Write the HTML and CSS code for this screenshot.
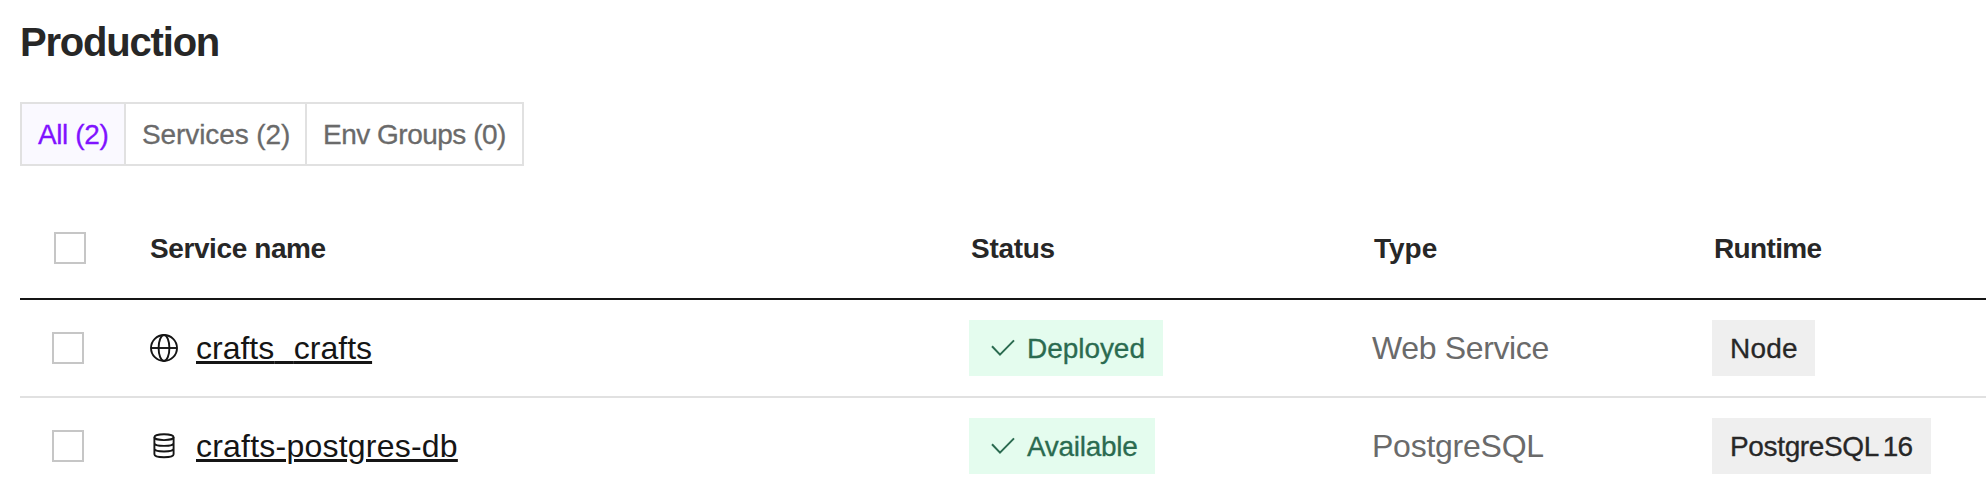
FILE: index.html
```html
<!DOCTYPE html>
<html lang="en">
<head>
<meta charset="utf-8">
<title>Production</title>
<link rel="stylesheet" href="styles.css">
</head>
<body>
<main class="page">
  <h1 class="title">Production</h1>
  <nav class="tabs">
    <button class="tab tab-all active">All (2)</button>
    <button class="tab tab-services">Services (2)</button>
    <button class="tab tab-env">Env Groups (0)</button>
  </nav>
  <section class="table">
    <div class="row head">
      <div class="cell"><span class="checkbox"></span></div>
      <div class="cell name-head">Service name</div>
      <div class="cell status-head">Status</div>
      <div class="cell">Type</div>
      <div class="cell runtime-head">Runtime</div>
    </div>
    <div class="row">
      <div class="cell"><span class="checkbox"></span></div>
      <div class="cell name">
        <svg class="icon" viewBox="0 0 28 28"><circle cx="14" cy="14" r="13"/><ellipse cx="14" cy="14" rx="5.4" ry="13"/><path d="M1 14H27"/></svg>
        <a class="link link-web">crafts<span class="underscore">_</span>crafts</a>
      </div>
      <div class="cell"><span class="badge status deployed"><svg class="check" viewBox="0 0 24 20"><path d="M1 8.2L9 16.6L23 2.4"/></svg>Deployed</span></div>
      <div class="cell type type-web">Web Service</div>
      <div class="cell"><span class="badge runtime node">Node</span></div>
    </div>
    <div class="row last">
      <div class="cell"><span class="checkbox"></span></div>
      <div class="cell name">
        <svg class="icon" viewBox="0 0 28 28"><ellipse cx="14" cy="5.2" rx="9.6" ry="2.9"/><path d="M4.4 5.2V22.3C4.4 26.2 23.6 26.2 23.6 22.3V5.2M4.4 10.9C4.4 14.8 23.6 14.8 23.6 10.9M4.4 16.6C4.4 20.5 23.6 20.5 23.6 16.6"/></svg>
        <a class="link link-db">crafts-postgres-db</a>
      </div>
      <div class="cell"><span class="badge status available"><svg class="check" viewBox="0 0 24 20"><path d="M1 8.2L9 16.6L23 2.4"/></svg>Available</span></div>
      <div class="cell type">PostgreSQL</div>
      <div class="cell"><span class="badge runtime postgres">PostgreSQL<span class="version"> 16</span></span></div>
    </div>
  </section>
</main>
</body>
</html>
```
FILE: styles.css
```css
* { box-sizing: border-box; }
body {
  margin: 0;
  background: #fff;
  color: #272727;
  font-family: "Liberation Sans", Arial, sans-serif;
  overflow: hidden;
}
.page { padding: 20px 0 0 20px; }
.title {
  margin: 0 0 38px;
  height: 44px;
  font-size: 40px;
  line-height: 44px;
  font-weight: 700;
  letter-spacing: -1.2px;
}
.tabs {
  display: inline-flex;
  height: 64px;
  border: 2px solid #e1e1e1;
}
.tab {
  padding: 1px 0 0 16px;
  border: 0;
  border-right: 2px solid #e1e1e1;
  background: #fff;
  color: #6a6a6a;
  font: 28px/59px "Liberation Sans", Arial, sans-serif;
  text-align: left;
  white-space: nowrap;
  -webkit-text-stroke: 0.3px currentColor;
}
.tab:last-child { border-right: 0; }
.tab.active { background: #faf9ff; color: #8012ff; }
.tab-all { width: 104px; letter-spacing: -0.4px; }
.tab-services { width: 181px; letter-spacing: -0.1px; }
.tab-env { width: 215px; letter-spacing: -0.5px; }
.table { margin-top: 32px; }
.row {
  display: grid;
  grid-template-columns: 130px 819px 403px 340px 1fr;
  height: 98px;
  border-bottom: 2px solid #e1e1e1;
}
.row.last { border-bottom-color: transparent; }
.cell {
  display: flex;
  align-items: center;
  white-space: nowrap;
}
.cell:first-child { padding-left: 32px; }
.head {
  height: 102px;
  border-bottom-color: #151515;
  font-size: 28px;
  font-weight: 700;
}
.head .cell { padding: 2px 0 0 2px; }
.head .cell:first-child { padding: 0 0 0 34px; }
.head .name-head { padding-left: 0; letter-spacing: -0.4px; }
.status-head { letter-spacing: -0.3px; }
.runtime-head { letter-spacing: -0.65px; }
.checkbox {
  width: 32px;
  height: 32px;
  border: 2px solid #c6c6c6;
}
.icon {
  width: 28px;
  height: 28px;
  margin-right: 18px;
  fill: none;
  stroke: #151515;
  stroke-width: 1.9;
}
.link {
  color: #151515;
  font-size: 32px;
  text-decoration: underline #151515 3px;
  text-underline-offset: 2px;
}
.link-web { letter-spacing: 0; text-decoration-skip-ink: none; }
/* the underline itself stands in for the underscore glyph */
.underscore { color: transparent; letter-spacing: 1.8px; }
.link-db { letter-spacing: 0.22px; }
.badge {
  display: flex;
  align-items: center;
  height: 56px;
  padding-top: 1px;
  font-size: 28px;
  -webkit-text-stroke: 0.3px currentColor;
}
.status { padding-left: 21.5px; background: #e4fcee; color: #2b6b50; }
.deployed { width: 194px; letter-spacing: -0.05px; }
.available { width: 186px; letter-spacing: -0.3px; }
.check {
  width: 24px;
  height: 20px;
  margin: 0 12.5px 1px 0;
  fill: none;
  stroke: currentColor;
  stroke-width: 2;
}
.type { color: #6a6a6a; font-size: 32px; letter-spacing: -0.25px; }
.type-web { letter-spacing: -0.35px; }
.runtime { padding-left: 18px; background: #efefef; }
.node { width: 103px; letter-spacing: 0.2px; }
.postgres { width: 219px; letter-spacing: -0.35px; }
.version { white-space: pre; word-spacing: -3px; letter-spacing: -1px; }
```
